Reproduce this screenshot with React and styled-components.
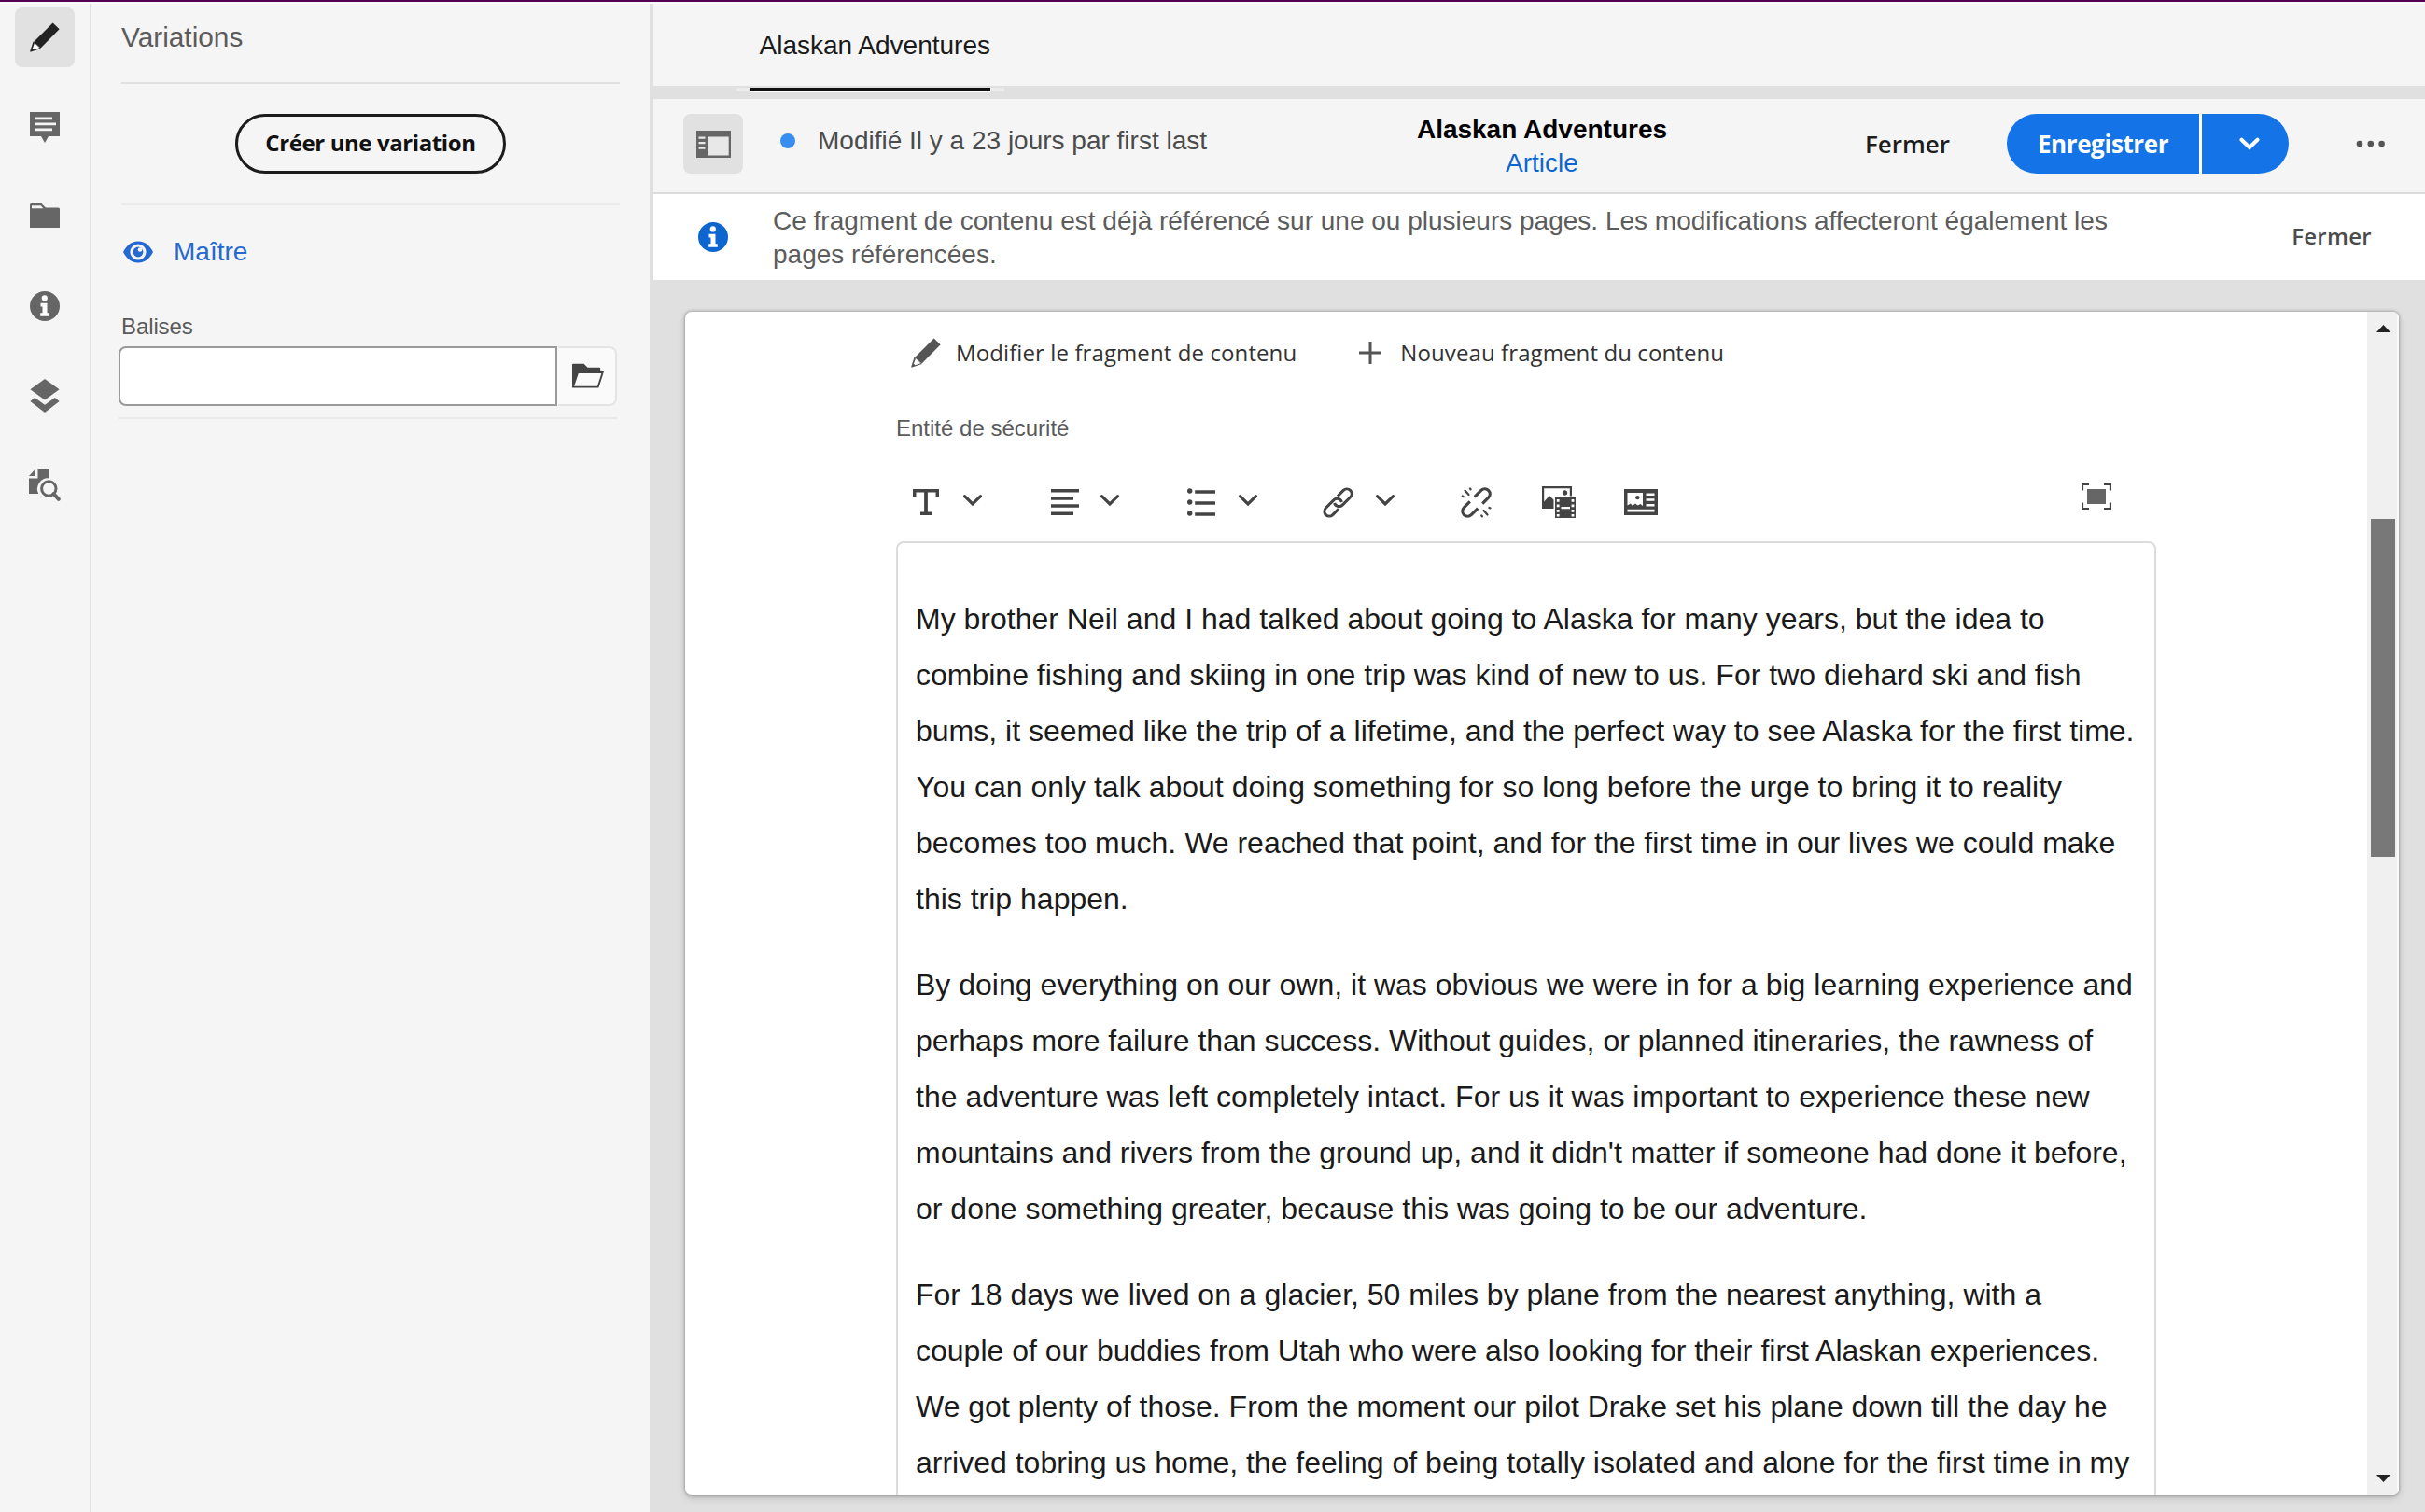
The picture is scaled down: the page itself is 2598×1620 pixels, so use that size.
import React from "react";
import styled, { createGlobalStyle } from "styled-components";

const sans = '"Liberation Sans", Arial, sans-serif';
const ui = '"Open Sans", "Noto Sans", sans-serif';

const GlobalStyle = createGlobalStyle`
  *, *::before, *::after { box-sizing: border-box; }
  body { margin: 0; background: #e0e0e0; font-family: ${sans}; color: #4b4b4b; }
  p { margin: 0; }
  svg { display: block; flex: none; }
  button { border: 0; padding: 0; margin: 0; background: none; color: inherit; font: inherit; }
`;

/* ---------- Shell ---------- */

const Shell = styled.div`
  display: flex;
  flex-direction: column;
  height: 1620px;
  overflow: hidden;
`;

const TopStrip = styled.div`
  flex: none;
  height: 4px;
  background: #550055;
  border-bottom: 2px solid #fbf8fb;
`;

const Body = styled.div`
  flex: 1;
  min-height: 0;
  display: flex;
`;

/* ---------- Rail ---------- */

const Rail = styled.nav`
  flex: none;
  width: 98px;
  padding: 4px 0 0 16px;
  display: flex;
  flex-direction: column;
  gap: 32px;
  background: #f5f5f5;
  border-right: 2px solid #e0e0e0;
`;

const Tile = styled.button`
  flex: none;
  width: 64px;
  height: 64px;
  display: flex;
  align-items: center;
  justify-content: center;
  border-radius: 8px;
  background: ${(p) => (p.$on ? "#e1e1e1" : "transparent")};
  color: ${(p) => (p.$dark ? "#222" : "#666")};
`;

/* ---------- Side panel ---------- */

const Panel = styled.aside`
  flex: none;
  width: 602px;
  background: #f5f5f5;
  border-right: 4px solid #e0e0e0;
`;

const PanelTitle = styled.h1`
  margin: 0 32px;
  height: 86px;
  padding-top: 18px;
  font-size: 29.8px;
  line-height: 36px;
  font-weight: 400;
  color: #5c5c5c;
  border-bottom: 2px solid #e0e0e0;
`;

const CreateArea = styled.div`
  margin: 0 32px;
  height: 130px;
  padding-top: 32px;
  display: flex;
  align-items: flex-start;
  justify-content: center;
  border-bottom: 2px solid #ebebeb;
`;

const OutlineButton = styled.button`
  width: 290px;
  height: 64px;
  padding-bottom: 3px;
  border: 3px solid #1c1c1c;
  border-radius: 32px;
  font: 700 24px/54px ${ui};
  letter-spacing: -0.4px;
  color: #111;
`;

const VariationRow = styled.a`
  margin: 32px 32px 0;
  height: 36px;
  padding-left: 2px;
  display: flex;
  align-items: center;
  gap: 22px;
  font-size: 28px;
  color: #2468d2;
`;

const TagField = styled.section`
  margin: 46px 35px 0 29px;
  padding-bottom: 12px;
  border-bottom: 2px solid #e9e9e9;
`;

const TagLabel = styled.label`
  display: block;
  padding-left: 3px;
  font-size: 24px;
  line-height: 32px;
  letter-spacing: -0.1px;
  color: #5a5a5a;
`;

const TagInputRow = styled.div`
  display: flex;
  height: 64px;
  margin-top: 5px;
`;

const TagInput = styled.div`
  flex: 1;
  background: #fff;
  border: 2px solid #9a9a9a;
  border-radius: 8px 0 0 8px;
`;

const BrowseButton = styled.button`
  width: 64px;
  padding-left: 2px;
  display: flex;
  align-items: center;
  justify-content: center;
  background: #fafafa;
  border: 2px solid #e4e4e4;
  border-left-color: #fafafa;
  border-radius: 0 8px 8px 0;
  color: #444;
`;

/* ---------- Main ---------- */

const Main = styled.main`
  flex: 1;
  min-width: 0;
  display: flex;
  flex-direction: column;
  background: #e0e0e0;
`;

const TabBar = styled.div`
  flex: none;
  height: 102px;
  display: flex;
  padding-left: 104px;
  background: #f5f5f5;
  border-bottom: 14px solid #e0e0e0;
`;

const Tab = styled.button`
  position: relative;
  width: 257px;
  text-align: left;
  padding: 1px 0 0 9.5px;
  font-size: 28px;
  white-space: nowrap;
  color: #1a1a1a;
  &::after {
    content: "";
    position: absolute;
    left: 0;
    right: 0;
    bottom: -6px;
    height: 4px;
    background: #111;
    box-shadow: -15px 0 0 #ebebeb, 15px 0 0 #ebebeb, 0 1px 0 #fff;
  }
`;

const Header = styled.header`
  flex: none;
  height: 102px;
  padding: 0 26px 4px 32px;
  display: flex;
  align-items: center;
  background: #f5f5f5;
  border-bottom: 2px solid #dcdcdc;
`;

const Status = styled.div`
  width: 721px;
  padding: 0 0 7px 40px;
  display: flex;
  align-items: center;
  gap: 24px;
  font-size: 28px;
  line-height: 36px;
  white-space: nowrap;
`;

const StatusDot = styled.span`
  width: 16px;
  height: 16px;
  border-radius: 50%;
  background: #378ef0;
`;

const TitleBlock = styled.div`
  width: 270px;
  padding-top: 5px;
  text-align: center;
  white-space: nowrap;
  font-size: 28px;
  line-height: 36px;
`;

const FragmentTitle = styled.div`
  font-weight: 700;
  color: #000;
`;

const ModelLink = styled.a`
  display: block;
  color: #0d66d0;
`;

const Actions = styled.div`
  margin-left: auto;
  display: flex;
  align-items: center;
  color: #555;
`;

const QuietButton = styled.button`
  color: ${(p) => (p.$muted ? "#4b4b4b" : "#1d1d1d")};
  font: 600 ${(p) => p.$size}px/36px ${ui};
  letter-spacing: ${(p) => (p.$muted ? 0.3 : 0)}px;
  padding-bottom: ${(p) => (p.$muted ? 3 : 0)}px;
`;

const SplitButton = styled.div`
  display: flex;
  gap: 3px;
  margin: 0 56px 0 61px;
  background: #fff;
  border-radius: 32px;
`;

const SaveButton = styled.button`
  width: 206px;
  height: 64px;
  padding: 0 0 1px 0;
  background: #1473e6;
  color: #fff;
  font: 700 26px/60px ${ui};
  letter-spacing: -0.4px;
  border-radius: 32px 0 0 32px;
`;

const SaveMenu = styled.button`
  width: 93px;
  height: 64px;
  padding-left: 8px;
  display: flex;
  align-items: center;
  justify-content: center;
  background: #1473e6;
  color: #fff;
  border-radius: 0 32px 32px 0;
`;

const Banner = styled.div`
  flex: none;
  height: 92px;
  padding: 0 57px 0 48px;
  display: flex;
  align-items: center;
  background: #fff;
  color: #0d66d0;
`;

const BannerText = styled.p`
  margin-left: 48px;
  padding-top: 1px;
  flex: 1;
  font-size: 28px;
  line-height: 36px;
  color: #5c5c5c;
`;

/* ---------- Fragment card ---------- */

const Card = styled.section`
  margin: 34px 28px 18px 34px;
  flex: 1;
  min-height: 0;
  display: flex;
  overflow: hidden;
  background: #fff;
  border-radius: 7px;
  box-shadow: 0 0 3px 1px rgba(0, 0, 0, 0.22), 0 3px 9px rgba(0, 0, 0, 0.15);
`;

const CardContent = styled.div`
  flex: 1;
  min-width: 0;
  padding: 12px 226px 0 226px;
`;

const FragmentActions = styled.div`
  display: flex;
  gap: 67px;
  height: 64px;
  padding-left: 16px;
`;

const FragmentAction = styled.button`
  display: flex;
  align-items: center;
  gap: ${(p) => p.$gap}px;
  font: 400 24px/36px ${ui};
  letter-spacing: 0.1px;
  white-space: nowrap;
  color: #323232;
  svg {
    color: #555;
  }
`;

const FieldLabel = styled.div`
  margin-top: 34px;
  font-size: 24px;
  line-height: 30px;
  color: #5a5a5a;
`;

const Tools = styled.div`
  display: flex;
  align-items: center;
  gap: 47.3px;
  height: 64px;
  margin-top: 32px;
  color: #444;
`;

const ToolMenu = styled.button`
  display: flex;
  align-items: center;
  width: 100px;
`;

const ToolCell = styled.span`
  width: 64px;
  display: flex;
  align-items: center;
  justify-content: center;
`;

const MenuCaret = styled.span`
  width: 36px;
  padding-bottom: 4px;
  display: flex;
  justify-content: center;
`;

const ToolSet = styled.div`
  display: flex;
  gap: 24.5px;
`;

const FullscreenButton = styled.button`
  margin-left: auto;
  padding: 0 48px 12px 0;
`;

const Editor = styled.article`
  margin-top: 10px;
  height: 1100px;
  padding: 51px 0 0 19px;
  display: flex;
  flex-direction: column;
  gap: 32px;
  border: 2px solid #dcdcdc;
  border-radius: 8px;
  font-size: 32px;
  line-height: 60px;
  color: #1a1a1a;
  white-space: pre;
`;

const Scrollbar = styled.div`
  flex: none;
  width: 34px;
  padding: 14px 2px 14px 4px;
  display: flex;
  flex-direction: column;
  align-items: center;
  background: #f0f0f0;
  border-right: 2px solid #fafafa;
`;

const ScrollThumb = styled.div`
  width: 26px;
  height: 362px;
  margin: 200px 0 auto;
  background: #787878;
`;

/* ---------- Icons ---------- */

const Svg = ({ w, h, children }) => (
  <svg width={w} height={h} viewBox={`0 0 ${w} ${h}`} fill="currentColor" aria-hidden="true">
    {children}
  </svg>
);

const PencilIcon = () => (
  <Svg w={32} h={32}>
    <path d="M24.6 0.4 31.6 7.2 11.6 27.6 4 21z" />
    <path d="M3.6 20.6 11.8 28 1.2 31.6c-.7.2-1.1-.3-.9-.9z" />
    <path d="M5 22 10.400 27.200 4.600 29.200 2.900 27.800z" fill="#fff" />
  </Svg>
);

const CommentIcon = () => (
  <Svg w={32} h={34}>
    <path d="M0 1h32v26H20l-4 7-4-7H0z" />
    <path d="M6 6.500h18v2.700H6zM6 12.500h22v2.700H6zM6 18.500h18v2.700H6z" fill="#f5f5f5" />
  </Svg>
);

const FolderIcon = () => (
  <Svg w={32} h={30}>
    <path d="M0 2.500A1.500 1.500 0 0 1 1.500 1H12.500L17 5.500H30.500A1.500 1.500 0 0 1 32 7V27H0z" />
    <path d="M2 3.200H11.700L14.400 6.200H2z" fill="#f5f5f5" />
  </Svg>
);

const InfoIcon = () => (
  <Svg w={32} h={32}>
    <circle cx="16" cy="16" r="16" />
    <circle cx="15.800" cy="7.400" r="3.100" fill="#fff" />
    <path d="M11.500 12.800h7v10.400h2.300v3.600h-9.600v-3.600h2.300v-6.800h-2z" fill="#fff" />
  </Svg>
);

const LayersIcon = () => (
  <Svg w={32} h={36}>
    <path d="M16 0 31.600 11.300 16 22.600 0.400 11.300z" />
    <path d="M5.200 20 16 27.800 26.800 20 31.600 23.900 16 36 0.400 23.900z" />
  </Svg>
);

const DocSearchIcon = () => (
  <Svg w={34} h={34}>
    <path d="M6.500 0v7H0z" />
    <path d="M9.500 0H22v9.400A11.500 11.500 0 0 0 10.200 26H0V9.500h9.500z" />
    <circle cx="21.300" cy="20.500" r="7.700" fill="none" stroke="currentColor" strokeWidth="3" />
    <path d="m26.500 26 5.300 5.800" stroke="currentColor" strokeWidth="4" strokeLinecap="round" />
  </Svg>
);

const EyeIcon = () => (
  <Svg w={32} h={24}>
    <path d="M16 0.500C24 0.500 29 6 32 12 29 18 24 23.500 16 23.500S3 18 0 12C3 6 8 0.500 16 0.500z" />
    <circle cx="16" cy="12" r="8.600" fill="#f5f5f5" />
    <circle cx="16" cy="12" r="5.400" />
    <circle cx="18" cy="9.500" r="2.300" fill="#f5f5f5" />
  </Svg>
);

const OpenFolderIcon = () => (
  <Svg w={34} h={28}>
    <path d="M0 1.500A1 1 0 0 1 1 .7H12.500L16.500 4.700H29A1.200 1.200 0 0 1 30.200 6V9H34L28.400 26.600H0z" />
    <path d="M6.800 10.900H31.400L27 24.800H2.200z" fill="#fafafa" />
  </Svg>
);

const SideRailIcon = () => (
  <Svg w={37} h={29}>
    <path d="M0 0h37v29H0z" />
    <path d="M12 6.500h22.700v20H12z" fill="#e8e8e8" />
    <path d="M2.500 6.500h7v2.300h-7zM2.500 12h7v2.300h-7zM2.500 17.500h7v2.300h-7z" fill="#e8e8e8" />
  </Svg>
);

const ChevronIcon = ({ w = 3.2 }) => (
  <Svg w={22} h={14}>
    <path d="M2.500 2.700 11 11 19.500 2.700" fill="none" stroke="currentColor" strokeWidth={w} strokeLinecap="round" />
  </Svg>
);

const MoreIcon = () => (
  <Svg w={64} h={8}>
    <circle cx="20" cy="4" r="3.300" />
    <circle cx="31.800" cy="4" r="3.300" />
    <circle cx="43.600" cy="4" r="3.300" />
  </Svg>
);

const PlusIcon = () => (
  <Svg w={24} h={24}>
    <path d="M10.500 0h3v10.500H24v3H13.500V24h-3V13.500H0v-3h10.500z" />
  </Svg>
);

const TextIcon = () => (
  <Svg w={28} h={28}>
    <path d="M0 0h28v8h-3.500V3.600H15.900V24.600H20V28H8v-3.400h4.100V3.600H3.500V8H0z" />
  </Svg>
);

const AlignIcon = () => (
  <Svg w={34} h={28}>
    <path d="M4 0h30v3.500H4zM4 8.200h24v3.500H4zM4 16.300h30v3.500H4zM4 24.500h24V28H4z" />
  </Svg>
);

const ListIcon = () => (
  <Svg w={30} h={30}>
    <circle cx="2.700" cy="3" r="2.700" />
    <circle cx="2.700" cy="15" r="2.700" />
    <circle cx="2.700" cy="27" r="2.700" />
    <path d="M8.200 2.200h21.800v3.500H8.200zM8.200 14.200h21.800v3.500H8.200zM8.200 26.200h21.800v3.500H8.200z" />
  </Svg>
);

const LinkIcon = () => (
  <Svg w={33} h={33}>
    <g transform="translate(16.500 16.500) rotate(-45)" fill="none" stroke="currentColor" strokeWidth="3">
      <path d="M-4.500 5.200H-13.300a5.200 5.200 0 0 1 0-10.400H-1.500a5.200 5.200 0 0 1 4.600 7.600" />
      <path d="M4.500-5.200H13.300a5.200 5.200 0 0 1 0 10.400H1.500a5.200 5.200 0 0 1-4.600-7.600" />
    </g>
  </Svg>
);

const UnlinkIcon = () => (
  <Svg w={33} h={33}>
    <g transform="translate(16.500 16.500) rotate(-45)" fill="none" stroke="currentColor" strokeWidth="3.200">
      <path d="M-3 5.500H-13a5.500 5.500 0 0 1 0-11H-4" />
      <path d="M3-5.500H13a5.500 5.500 0 0 1 0 11H4" />
    </g>
    <g fill="none" stroke="currentColor" strokeWidth="2.200" strokeLinecap="round">
      <path d="M4.500 3.500 8.500 8M10 1.500l.5.800M1.800 9.500l1 .6M24.500 25 28.500 29.500M22.300 30.500l.6.800M30.500 22l1 .4" />
    </g>
  </Svg>
);

const MediaIcon = () => (
  <Svg w={36} h={34}>
    <path d="M0 0h32v10.500h-2.200V2.200H2.200v14.300L8 10l4.500 4.500V24H0z" />
    <circle cx="24.500" cy="7" r="2.700" />
    <path d="M14 12h22v22H14z" />
    <path
      d="M15.800 14h2.800v2.800h-2.800zM15.800 19.500h2.800v2.800h-2.800zM15.800 25h2.800v2.800h-2.800zM15.800 30h2.800v2.500h-2.800zM31.600 14h2.800v2.800h-2.800zM31.600 19.500h2.800v2.800h-2.800zM31.600 25h2.800v2.800h-2.800zM31.600 30h2.800v2.500h-2.800zM20.500 22h9.500v2.200h-9.500z"
      fill="#fff"
    />
  </Svg>
);

const ArticleIcon = () => (
  <Svg w={36} h={28}>
    <path d="M0 0h36v28H0z" />
    <path
      d="M3.500 4H20V18l-2.500-2-3 1.500L12 15.500 9 18l-2-2.500L3.500 17.500zM23.500 4.500h9v2.500h-9zM23.500 10.200h9v2.600h-9zM23.500 16h9v2.500h-9zM3.500 21.700h29v2.800h-29z"
      fill="#fff"
    />
    <circle cx="14.300" cy="9.200" r="2.100" />
  </Svg>
);

const FullscreenIcon = () => (
  <Svg w={32} h={28}>
    <path d="M6 6h20v16H6z" fill="#666" />
    <path d="M1 7.500V1H8M24 1h7v6.500M31 20.500V27h-7M8 27H1v-6.500" fill="none" stroke="currentColor" strokeWidth="2.200" />
  </Svg>
);

const ArrowIcon = ({ down }) => (
  <Svg w={15} h={8}>
    <path d={down ? "M0 0h15L7.500 8z" : "M0 8h15L7.500 0z"} fill="#222" />
  </Svg>
);

/* ---------- Content ---------- */

const railIcons = [PencilIcon, CommentIcon, FolderIcon, InfoIcon, LayersIcon, DocSearchIcon];
const toolMenus = [TextIcon, AlignIcon, ListIcon, LinkIcon];
const tools = [UnlinkIcon, MediaIcon, ArticleIcon];

const paragraphs = [
  [
    "My brother Neil and I had talked about going to Alaska for many years, but the idea to",
    "combine fishing and skiing in one trip was kind of new to us. For two diehard ski and fish",
    "bums, it seemed like the trip of a lifetime, and the perfect way to see Alaska for the first time.",
    "You can only talk about doing something for so long before the urge to bring it to reality",
    "becomes too much. We reached that point, and for the first time in our lives we could make",
    "this trip happen.",
  ],
  [
    "By doing everything on our own, it was obvious we were in for a big learning experience and",
    "perhaps more failure than success. Without guides, or planned itineraries, the rawness of",
    "the adventure was left completely intact. For us it was important to experience these new",
    "mountains and rivers from the ground up, and it didn't matter if someone had done it before,",
    "or done something greater, because this was going to be our adventure.",
  ],
  [
    "For 18 days we lived on a glacier, 50 miles by plane from the nearest anything, with a",
    "couple of our buddies from Utah who were also looking for their first Alaskan experiences.",
    "We got plenty of those. From the moment our pilot Drake set his plane down till the day he",
    "arrived tobring us home, the feeling of being totally isolated and alone for the first time in my",
  ],
];

export default function App() {
  return (
    <Shell>
      <GlobalStyle />
      <TopStrip />
      <Body>
        <Rail>
          {railIcons.map((Icon, i) => (
            <Tile key={i} $on={i === 0} $dark={i === 0}>
              <Icon />
            </Tile>
          ))}
        </Rail>
        <Panel>
          <PanelTitle>Variations</PanelTitle>
          <CreateArea>
            <OutlineButton>Créer une variation</OutlineButton>
          </CreateArea>
          <VariationRow>
            <EyeIcon />
            Maître
          </VariationRow>
          <TagField>
            <TagLabel>Balises</TagLabel>
            <TagInputRow>
              <TagInput />
              <BrowseButton>
                <OpenFolderIcon />
              </BrowseButton>
            </TagInputRow>
          </TagField>
        </Panel>
        <Main>
          <TabBar>
            <Tab>Alaskan Adventures</Tab>
          </TabBar>
          <Header>
            <Tile $on>
              <SideRailIcon />
            </Tile>
            <Status>
              <StatusDot />
              Modifié Il y a 23 jours par first last
            </Status>
            <TitleBlock>
              <FragmentTitle>Alaskan Adventures</FragmentTitle>
              <ModelLink>Article</ModelLink>
            </TitleBlock>
            <Actions>
              <QuietButton $size={26}>Fermer</QuietButton>
              <SplitButton>
                <SaveButton>Enregistrer</SaveButton>
                <SaveMenu>
                  <ChevronIcon w={4} />
                </SaveMenu>
              </SplitButton>
              <MoreIcon />
            </Actions>
          </Header>
          <Banner>
            <InfoIcon />
            <BannerText>
              Ce fragment de contenu est déjà référencé sur une ou plusieurs pages. Les modifications affecteront également les
              <br />
              pages référencées.
            </BannerText>
            <QuietButton $size={24} $muted>
              Fermer
            </QuietButton>
          </Banner>
          <Card>
            <CardContent>
              <FragmentActions>
                <FragmentAction $gap={16}>
                  <PencilIcon />
                  Modifier le fragment de contenu
                </FragmentAction>
                <FragmentAction $gap={20}>
                  <PlusIcon />
                  Nouveau fragment du contenu
                </FragmentAction>
              </FragmentActions>
              <FieldLabel>Entité de sécurité</FieldLabel>
              <Tools>
                {toolMenus.map((Icon, i) => (
                  <ToolMenu key={i}>
                    <ToolCell>
                      <Icon />
                    </ToolCell>
                    <MenuCaret>
                      <ChevronIcon />
                    </MenuCaret>
                  </ToolMenu>
                ))}
                <ToolSet>
                  {tools.map((Icon, i) => (
                    <ToolCell key={i}>
                      <Icon />
                    </ToolCell>
                  ))}
                </ToolSet>
                <FullscreenButton>
                  <FullscreenIcon />
                </FullscreenButton>
              </Tools>
              <Editor>
                {paragraphs.map((lines, i) => (
                  <p key={i}>{lines.join("\n")}</p>
                ))}
              </Editor>
            </CardContent>
            <Scrollbar>
              <ArrowIcon />
              <ScrollThumb />
              <ArrowIcon down />
            </Scrollbar>
          </Card>
        </Main>
      </Body>
    </Shell>
  );
}
